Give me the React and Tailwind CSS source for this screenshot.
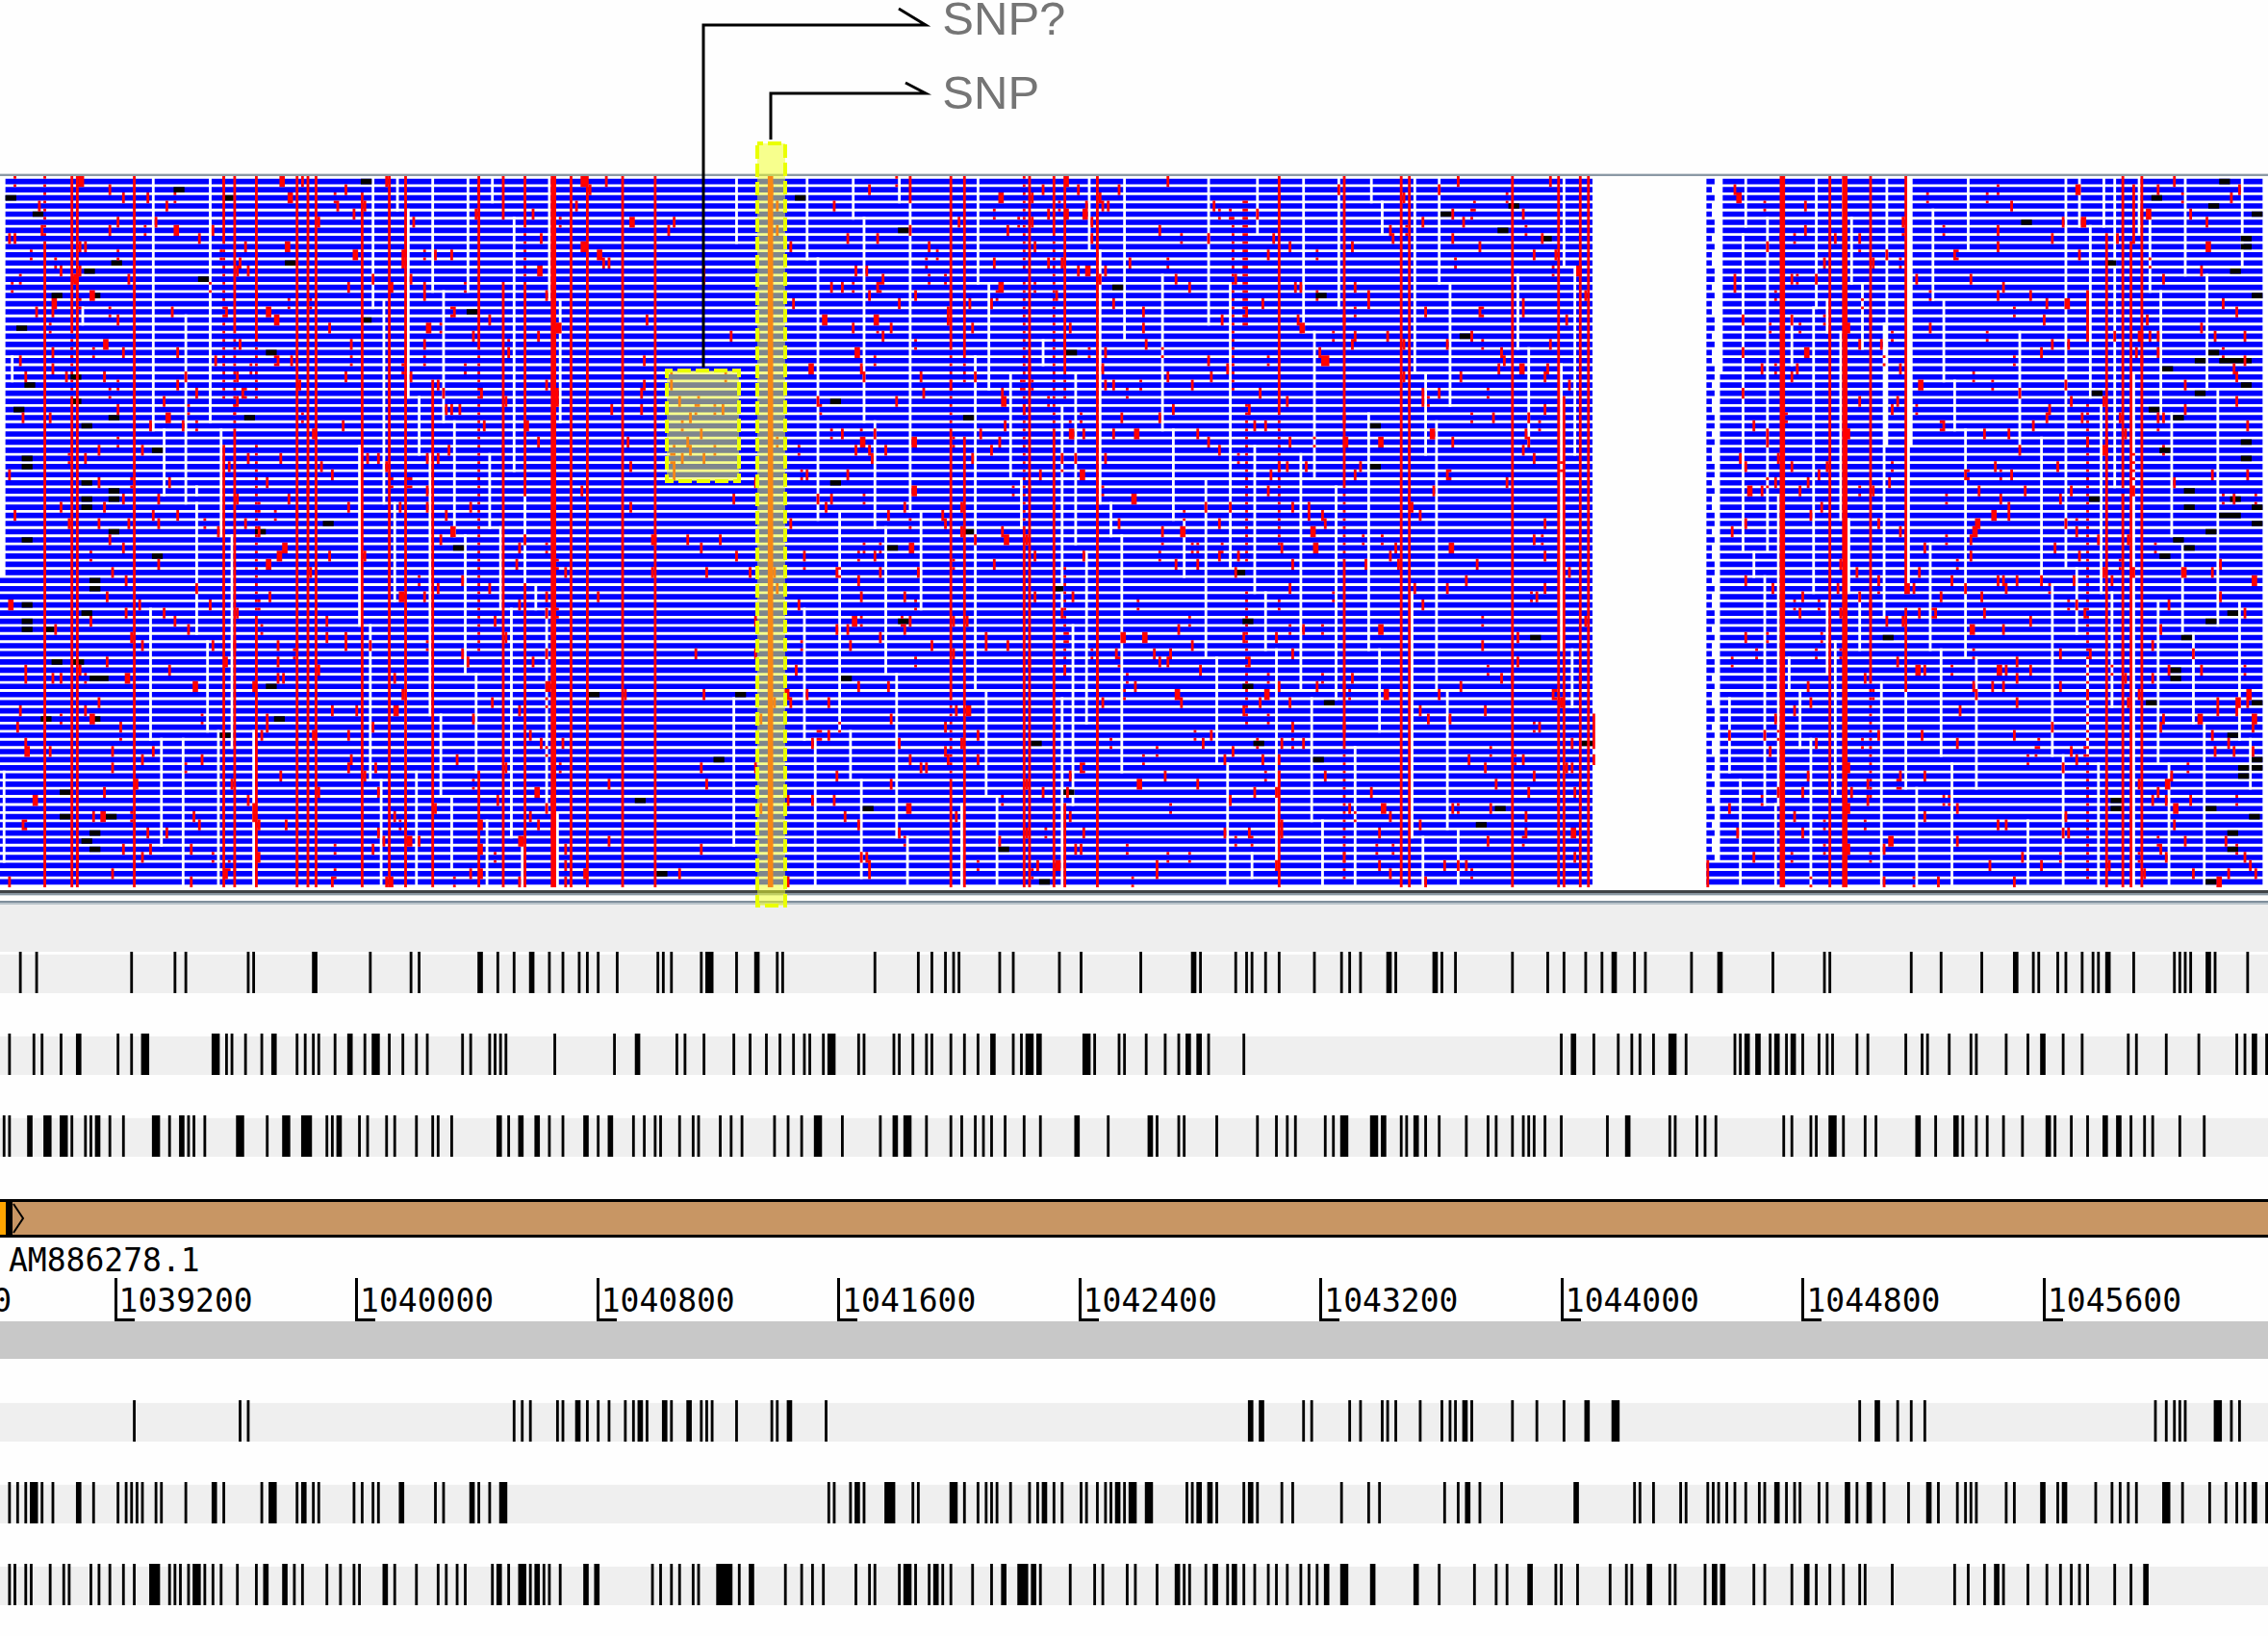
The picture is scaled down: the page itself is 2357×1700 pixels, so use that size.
import React from "react";

// Everything below is drawn on a grid of 836 columns across the view.
const COLUMNS = 836;
const UNIT = 2357 / COLUMNS;
const ROWS = 87;

const rect = (x, y, w, h) => `M${x} ${y}h${w}v${h}h${-w}z`;

// ---- Stop codon tracks -------------------------------------------------
const TRACK_PARTS = [
  { start: 0, scale: 1.96 },
  { start: 780, scale: 1.96 },
  { start: 1560, scale: 1.967 },
];

const FORWARD = [
  {
    label: "Forward frame 1",
    parts: [
      "41 75 268 357 378 506 516 641x2 755 837 854 978x2 1014 1048 1083x2 1119 1147 1180 1197 1218 1257 1340 1351 1368 1429 1445x3 1500 1542x2",
      "54 66 253 342 369 397 414 424 508 535 629 673 795 903x2 917 989 1010 1021 1049 1077 1149 1204 1220 1243 1300x2 1314 1395x2 1409 1437",
      "23 95 129 173 207 231x2 273 295 390 448x2 556 661 672 838 899 983 1052x2 1089 1100 1138 1155 1188 1210 1221 1240x2 1294 1377 1388 1399 1410 1446x2 1460 1527",
    ],
  },
  {
    label: "Forward frame 2",
    parts: [
      "20 70 85 124 161x2 240 268 296x3 439x3 461 472 501 533 558x2 605 621 638 649 683 713x2 744 765x3 793 820 849 870 942 958 997 1008 1020 1031 1130 1251 1298x2 1379 1395 1434 1495 1528 1561",
      "60 87 110 121 149 165x3 220 231 292 303 330 358 369 408 435 463 494x2 535 552 568x3 588x2 684x3 701 751 761 806 845 872 892x2 913x2 933 1005",
      "123 148x2 190 240 268 284 312 350x3 379 478 489 503x2 525x2 550 564x2 583 597x2 617 650 667 678 728 750 827 861 872 916 961 972 1033 1077 1108x2 1149 1188 1283 1299 1360 1426 1504 1521 1540x2 1565",
    ],
  },
  {
    label: "Forward frame 3",
    parts: [
      "8 19 61x2 96x3 130x3 146 174 185 199x2 223 252 318x3 346 370x2 384 395 417 489x3 545 583x3 624x4 666 677 691x2 732 749 787 804 849 881 893 921 1017x2 1036 1061x2 1094x2 1119 1147 1194x2 1218 1243x2 1291 1312 1334 1345 1385 1412 1423 1467 1489 1511",
      "49 76 104 137x3 187 265 295x2 319x3 358 408 430 458 474 491 519 558 590 665x2 728 814x2 828 872 883 950 1033 1071 1093 1109 1171 1187 1209x3 1270x3 1290x2 1326 1337 1355x2 1375 1402 1458 1502 1519",
      "23 45 56 68 90 123 217 259x2 345 356 400 417 439 578 594 634 644 678x3 700 745 767 852x2 888 930x2 944 971 994 1027 1066 1119x2 1132 1166 1199 1235x2 1262x2 1288 1315 1332 1388 1438",
    ],
  },
];

const REVERSE = [
  {
    label: "Reverse frame 1",
    parts: [
      "273 489 506 1047 1064 1080 1136 1147 1177x2 1197 1218 1241 1273 1290 1304x2 1318 1353x2 1368 1403x2 1429 1440 1451 1500",
      "43 55 79x2 154 1018x2 1041x2 1126 1143 1220 1243 1287 1298 1314 1364 1408 1425 1437 1455x2 1469",
      "23 73 129 176x2 234x3 733 769x2 811 838 867 1338 1360 1377 1388 1399 1465x3 1493 1510",
    ],
  },
  {
    label: "Reverse frame 2",
    parts: [
      "20 36 53 69x3 86 109 161x2 191 240 257 268 279 290 318 329 378 437x2 456 533 555x3 605 618x2 638 649 721 738 760 771 818x2 887 904 961x2 976 998 1025x3",
      "160 171 204 217x2 231 283x4 330 342 413x3 436 463 480 491 502 530 568 585 599x2 617 634 673 684 707 723 734 748x2 762 778x3 811x3 889 900 913x2 936x2 950 1005 1018x2 1033 1082 1104 1204 1259 1281 1414 1441 1460x2 1486 1530",
      "153x2 273 284 312 367 379 423 434 445 461 478 501 528 539 564x2 583 600 611 650 667 708x2 728 752x2 783 833 875x2 894 933 949 960 972 1033 1050 1108x2 1138 1152x2 1216 1249 1266 1283 1299 1360x3 1394 1449 1482 1504 1521 1540x2 1565",
    ],
  },
  {
    label: "Reverse frame 3",
    parts: [
      "19 30 53 65 102 129 141 185 202 224 252 274 315x4 346 356 367 384 401x3 418 434 450 484 522 541x2 580x2 600 616 666 694 721 732 785x2 804 849 893 909 932 949 1003 1016x2 1036 1063x3 1081 1094x2 1108 1119 1141 1194x2 1216x2 1329 1346 1368 1384 1412 1423 1475x6 1506 1531x2",
      "71 104 126 148 214 242 253 303 319x3 336 364 377x2 391 408 452 491 516x2 554x4 576x2 591 652 701 717 767 783 828 869x2 883 894 928 947x2 971 986x2 1005 1027 1055 1071 1093 1121 1137 1153 1173x2 1209x3 1267x2 1355x2 1402 1475 1519 1541",
      "12 59x2 111 123 156 223 256 267 303x2 345 356 417 437x2 453x2 516 539 594 625x2 644 672 700 733 745 800 928 955 989 1013x2 1028 1077 1116 1144 1166 1182 1199 1254 1288 1318x2",
    ],
  },
];

function trackPath(parts) {
  return parts
    .map((text, i) => {
      const { start, scale } = TRACK_PARTS[i];
      return text
        .split(" ")
        .map((item) => {
          const [centre, count] = item.split("x");
          const width = Number(count || 1);
          const column = Math.round((start + centre / scale) / UNIT - width / 2);
          return rect(column, 0, width, 15);
        })
        .join("");
    })
    .join("");
}

function Track({ label, parts }) {
  return (
    <svg
      role="img"
      aria-label={label}
      viewBox="0 0 836 15"
      preserveAspectRatio="none"
      className="block h-[43px] w-full"
    >
      <rect y="1" width="836" height="14" fill="#efefef" />
      <path d={trackPath(parts)} fill="#000" />
    </svg>
  );
}

// ---- Read alignment ----------------------------------------------------
const READ_PARTS = [0, 780, 1567];
const READ_SCALE = 1.985;
const readColumn = (part, x, w) =>
  Math.round((READ_PARTS[part] + x / READ_SCALE) / UNIT - w / 2);
const readRow = (y) => Math.max(0, Math.min(ROWS - 1, Math.round((y - 19) / 17.68)));

// x:top-bottom, with an optional xN width and a trailing d for a dotted line
const VARIANTS = [
  "92:150-1549 92:5-149d 149:5-340 149:341-480d 149:481-1549 160:5-1549 277:5-1549 461:5-150 461:151-500d 461:600-1549 484:5-340 484:341-560d 484:561-1549 528:5-360 528:361-500d 528:600-960d 528:961-1549 612:5-1549 635:5-1549 652:5-1549 746:45-1549 802:5-1549 837:5-1549 892:450-1549 987:5-240 987:241-380 987:381-1060d 987:1300-1549 1038:5-100 1038:240-1549 1083:5-110 1083:111-240d 1083:241-700 1083:890-1549 1141:5-1549x2 1178:5-1549 1212:5-1549 1284:5-1549 1352:5-1549",
  "41:5-1549x2 329:5-65 413:5-380 413:381-560d 413:561-1140 413:1141-1320d 413:1321-1549 442:5-400 442:401-470d 442:575-1549 564:5-230d 564:231-770d 564:771-1549 576:5-1549 626:5-140 626:141-560d 626:561-1549 648:5-430 648:431-500d 648:860-1100d 648:1370-1549 716:5-1549 995:90-480d 1022:60-350dx2 1022:500-860d 1022:910-1220d 1090:5-520 1090:521-820d 1090:1300-1549 1225:5-680 1225:681-840d 1225:841-1240 1225:1241-1549d 1342:5-1549 1359:5-1549",
  "9:5-1549 105:5-1549 117:480-1549 150:5-1549 167:5-1549 178:1175-1245 178:1265-1280 412:1490-1549 567:5-1549x2 664:5-400 664:401-560 664:561-1549 695:5-1549x2 748:5-1100 748:1101-1370d 820:5-910 820:950-1120 1196:250-370 1196:500-820d 1196:821-1549d 1236:130-560 1236:561-1549 1268:5-690 1268:691-1549 1285:150-1549 1293:30-150 1307:5-200 1307:201-500 1307:501-1549",
];

const READ_ENDS = [
  "317:10-555 434:10-540 384:315-715 338:560-700 457:560-790 406:718-1000 478:790-1240 311:950-1228 429:1020-1210 332:1232-1455 378:1232-1549 451:1215-1549 522:1215-1549 770:10-290 820:10-80 843:80-490 893:10-250 966:10-255 1015:10-60 915:260-540 865:490-605 792:275-715 938:540-785 1060:100-645 1133:10-275 1156:275-540 741:595-985 887:610-1175 814:715-930 1010:615-765 961:790-1085 1033:775-945 1083:700-890 1105:895-945 764:985-1315 837:1090-1280 1055:950-1440 1128:950-1385 983:1090-1300 910:1180-1350 859:1300-1549 787:1320-1549 932:1355-1510 1005:1410-1549 1150:1390-1549 1078:1440-1549 1518:10-150 1513:1145-1455 8:1300-1490 25:400-450 171:295-330 404:685-700",
  "116:10-185 211:10-95 307:10-60 234:100-535 139:190-750 329:65-735 469:10-240 491:240-465 699:10-165 720:165-718 770:10-360 463:400-1120 603:365-415 670:435-800 642:505-945 536:435-665 559:665-770 257:540-770 850:225-555 872:560-750 894:750-875 945:10-325 1045:10-130 1140:10-345 989:240-855 1163:345-665 1213:10-290 1280:10-60 1303:65-130 1370:10-430 1392:435-610 1420:10-240 1442:240-505 1038:595-910 940:665-1050 1135:615-1120 1208:685-1140 1275:525-1035 1415:540-1120 1062:910-1035 1085:1040-1510 184:735-1210 351:735-945 279:770-1085 111:950-1225 693:825-1190 766:790-1300 743:715-785 665:985-1370 642:1140-1549 301:1090-1440 486:1125-1350 206:1215-1315 133:1230-1549 228:1320-1525 324:1440-1549 436:1370-1549 508:1355-1549 962:1055-1280 983:1285-1549 1157:1145-1405 1180:1410-1549 1297:1040-1210 1247:1250-1549 1365:915-1440 1387:1440-1549 1437:1125-1420 1460:1420-1549 1034:1480-1530",
  "117:10-200 139:205-605 111:420-1035 133:1040-1160 22:225-380 44:385-590 489:10-110 484:135-820 535:100-820 507:825-875 530:880-1365 637:10-290 631:295-910 658:270-340 690:5-95 707:95-235 730:240-380 685:345-750 702:755-910 725:915-1040 782:10-320 778:320-600x2 776:600-960 828:10-600x2 828:600-900 877:85-275 899:275-450 922:455-555 944:560-1050 871:810-1035 950:10-165 1055:350-590 1101:580-890 1122:895-1260 1150:10-855 1173:860-1000 1178:10-110 1201:115-480 1196:1050-1260 1229:10-110 1251:10-690 1224:510-910 1246:915-1155 1291:430-1549 1301:5-130 1325:100-250 1347:260-520 1397:10-230 1515:10-200 1442:225-465 1465:470-980 1370:530-780 1392:800-995 1342:930-1280 1415:1000-1190 1437:1190-1549 1510:930-1225 1532:1230-1330 557:700-1370 656:930-1085 675:1020-1350 770:1110-1549 820:1120-1335 894:1040-1260 916:1285-1549 967:1055-1340 1073:1410-1549 1145:1270-1549 1218:1285-1549 1364:1285-1549 580:1050-1120 603:1125-1240 626:1230-1549 552:1370-1549 457:1145-1300 479:1310-1549 843:1340-1549 586:315-415",
];

const INSERTS = [
  "755:19 372:36 22:54 471:54 81:90 240:196 597:196 184:213 421:231 115:267 197:267 42:337 757:319 975:301 559:390 157:443 62:461 157:496 39:514 234:532 514:532 179:549 324:602 58:620 58:638 179:673 234:690 179:708 234:708 179:726 675:762 234:779 537:779 58:797 946:815 324:832 198:885 198:903 58:938 181:956 58:973 56:991 100:991 115:1062 160:1062 196:1097 210:1097 557:1115 1227:1133 1527:1125 95:1186 196:1186 577:1186 465:1221 1481:1274 134:1345 1318:1363 134:1398 232:1398 196:1433 177:1451 196:1469 1368:1522",
  "103:54 315:125 758:249 1177:267 1435:90 1551:125 661:390 1475:355 176:496 450:532 1288:549 1290:638 176:673 452:779 292:815 1008:868 634:903 315:973 1025:973 198:1097 1026:1115 1194:1150 588:1239 1047:1239 1171:1274 654:1345 242:1380 1544:1380 1507:1416 522:1469 606:1539",
  "1479:19 12:72 1456:72 1338:54 1545:90 1068:107 80:143 1526:143 1526:160 1246:196 1500:213 1545:267 1456:390 1428:408 1480:408 1500:408 1524:408 1362:426 1522:461 1216:478 1428:478 1332:514 1383:532 1522:585 1355:602 1522:620 1405:690 1210:708 1502:708 1405:726 1545:726 1480:744 1500:744 1545:762 1450:779 1386:797 1405:815 1355:832 1495:956 1450:973 1400:1009 785:1009 56:1009 1378:1080 1378:1097 1326:1150 1545:1150 1495:1221 163:1239 1545:1274 1545:1292 1516:1292 1516:1309 1254:1363 1254:1380 1450:1380 1540:1398 1495:1433 1495:1469 1450:1539",
];

// Mismatches inside the boxed candidate region
const CANDIDATES =
  "1385:443d 1497:443d 1385:461 1402:496 1441:496d 1491:514 1435:514d 1475:514d 1424:532 1408:549d 1447:567 1418:585 1424:602 1390:602d 1475:602d 1408:620 1453:620 1385:620d 1390:638 1390:655";

function parseLines(texts) {
  return texts.flatMap((text, part) =>
    text.split(" ").map((item) => {
      const [, x, top, bottom, dotted, w] = item.match(/^(\d+):(\d+)-(\d+)(d?)(?:x(\d))?$/);
      const width = Number(w || 1);
      return {
        column: readColumn(part, Number(x), width),
        from: readRow(Number(top) + 9),
        to: readRow(Number(bottom) - 9),
        width,
        dotted: dotted === "d",
      };
    })
  );
}

const GAP_START = 587;
const GAP_END = 629;

function blueRows() {
  let d = "";
  for (let r = 0; r < ROWS; r++) {
    const y = 1 + 3 * r;
    const left = r < 49 ? 2 : 0;
    d += rect(left, y, GAP_START - left, 2);
    if (r < 84) {
      const stub = [3, 2, 3, 2, 2, 3][r % 6];
      const resume = r < 24 ? 635 : 634;
      d += rect(GAP_END, y, stub, 2);
      d += rect(resume, y, 834 - resume, 2);
    } else {
      d += rect(GAP_END, y, 834 - GAP_END, 2);
    }
  }
  return d;
}

function variantLines() {
  return parseLines(VARIANTS)
    .map(({ column, from, to, width, dotted }) => {
      if (!dotted) return rect(column, 3 * from, width, 3 * (to - from) + 4);
      let d = "";
      for (let r = from; r <= to; r++) d += rect(column, 3 * r, width, 1);
      return d;
    })
    .join("");
}

function readEnds() {
  return parseLines(READ_ENDS)
    .map(({ column, from, to, width }) => rect(column, 3 * from, width, 3 * (to - from) + 4))
    .join("");
}

function inserts() {
  return INSERTS.flatMap((text, part) =>
    text.split(" ").map((item) => {
      const [x, y] = item.split(":").map(Number);
      return rect(readColumn(part, x, 4), 1 + 3 * readRow(y), 4, 2);
    })
  ).join("");
}

const edgesOnly = (column, row) => rect(column, 3 * row, 1, 1) + rect(column, 3 * row + 3, 1, 1);

function candidates() {
  return CANDIDATES.split(" ")
    .map((item) => {
      const [x, y] = item.split(":");
      const column = readColumn(0, Number(x), 1);
      const row = readRow(parseInt(y, 10));
      return y.endsWith("d") ? edgesOnly(column, row) : rect(column, 3 * row, 1, 4);
    })
    .join("");
}

// Isolated mismatches, spread by a fixed linear congruential sequence.
function mismatches() {
  let seed = 20117;
  const next = () => {
    seed = (seed * 1664525 + 1013904223) % 4294967296;
    return seed / 4294967296;
  };
  let d = "";
  for (let r = 0; r < ROWS; r++) {
    for (let i = 0; i < 20; i++) {
      const column = 3 + Math.floor(next() * 829);
      const kind = next();
      if (column > GAP_START - 3 && column < 637) continue;
      if (column > 243 && column < 274 && r > 21 && r < 38) continue;
      if (column > 206 && column < 278 && kind < 0.6) continue;
      if (kind < 0.2) {
        d += edgesOnly(column, r);
      } else {
        d += rect(column, 3 * r, kind > 0.95 ? 2 : 1, 4);
      }
    }
  }
  return d;
}

function Alignment() {
  return (
    <svg
      role="img"
      aria-label="Aligned reads"
      viewBox="0 0 836 262"
      preserveAspectRatio="none"
      className="block h-[739px] w-full"
    >
      <path d={blueRows()} fill="#0000ff" />
      <path d={readEnds()} fill="#fefefe" />
      <path d={inserts()} fill="#000" />
      <path d={mismatches()} fill="#ff0000" />
      <path d={candidates()} fill="#ff0000" />
      <path d={variantLines()} fill="#ff0000" />
    </svg>
  );
}

// ---- Annotations over the alignment ------------------------------------
function Callouts() {
  return (
    <svg
      aria-hidden="true"
      viewBox="0 0 2357 945"
      preserveAspectRatio="none"
      className="pointer-events-none absolute inset-x-0 top-0 h-[945px] w-full"
    >
      <g fill="#f0ff28" fillOpacity="0.53">
        <rect x="787" y="149" width="29" height="792" />
        <rect x="693" y="385" width="75" height="115" />
      </g>
      <g fill="none" stroke="#eaff00" strokeWidth="4" strokeDasharray="14 5" strokeDashoffset="8">
        <rect x="787" y="149" width="29" height="792" />
        <rect x="693" y="385" width="75" height="115" />
      </g>
      <g fill="none" stroke="#000" strokeWidth="3">
        <path d="M731 382V26H962L934 9" strokeMiterlimit="8" />
        <path d="M801 145V97H962L941 86" strokeMiterlimit="8" />
      </g>
    </svg>
  );
}

const RULER = [
  "1038400",
  "1039200",
  "1040000",
  "1040800",
  "1041600",
  "1042400",
  "1043200",
  "1044000",
  "1044800",
  "1045600",
];

function Ruler() {
  return (
    <div className="flex h-[45px] overflow-hidden">
      {RULER.map((position, i) => (
        <div
          key={position}
          className={
            "relative h-[45px] w-[10.63%] shrink-0 border-l-[3px] border-black pl-[2px] pt-[9px]" +
            (i === 0 ? " -ml-[5.6%]" : "")
          }
        >
          <span className="block leading-[30px]">{position}</span>
          <span className="absolute bottom-0 left-0 h-[3px] w-[18px] bg-black" />
        </div>
      ))}
    </div>
  );
}

export default function App() {
  return (
    <main className="relative min-h-screen overflow-hidden bg-[#fefefe] text-black">
      <header className="h-[180px]">
        <div className="ml-[41.55%] flex flex-col gap-[38px] font-['Liberation_Sans',sans-serif] text-[49px] leading-[39px] text-[#757575]">
          <p>SNP?</p>
          <p>SNP</p>
        </div>
      </header>

      <section>
        <div className="h-[3px] border-t border-[#d5dade] bg-[#8b99a5]" />
        <Alignment />
      </section>
      <div className="mt-[3px] h-[5px] border-b-2 border-[#8a98a3] bg-[#3f4347]" />
      <div className="h-[6px] border-t border-[#d5dbe0]" />
      <div className="h-[4px] border-b-2 border-[#b9c3ca] bg-[#7f8f9c]" />
      <div className="h-[49px] bg-[#eeeeee]" />

      <section className="flex flex-col gap-[42px]">
        {FORWARD.map((track) => (
          <Track key={track.label} {...track} />
        ))}
      </section>

      <section className="mt-11 font-['DejaVu_Sans_Mono',monospace] text-[33px]">
        <div className="flex h-10 border-y-[3px] border-black bg-[#c89664]">
          <span className="w-[6px] bg-[#ffa500]" />
          <span className="w-[7px] bg-black" />
          <svg aria-hidden="true" viewBox="0 0 14 34" className="h-[34px] w-[14px]">
            <path d="M1 2L11 17L1 32" fill="none" stroke="#000" strokeWidth="2" />
          </svg>
        </div>
        <h1 className="h-[42px] pl-[9px] pt-[9px] leading-[30px]">AM886278.1</h1>
        <Ruler />
        <div className="h-[39px] bg-[#c8c8c8]" />
      </section>

      <section className="mt-[43px] flex flex-col gap-[42px]">
        {REVERSE.map((track) => (
          <Track key={track.label} {...track} />
        ))}
      </section>

      <Callouts />
    </main>
  );
}
